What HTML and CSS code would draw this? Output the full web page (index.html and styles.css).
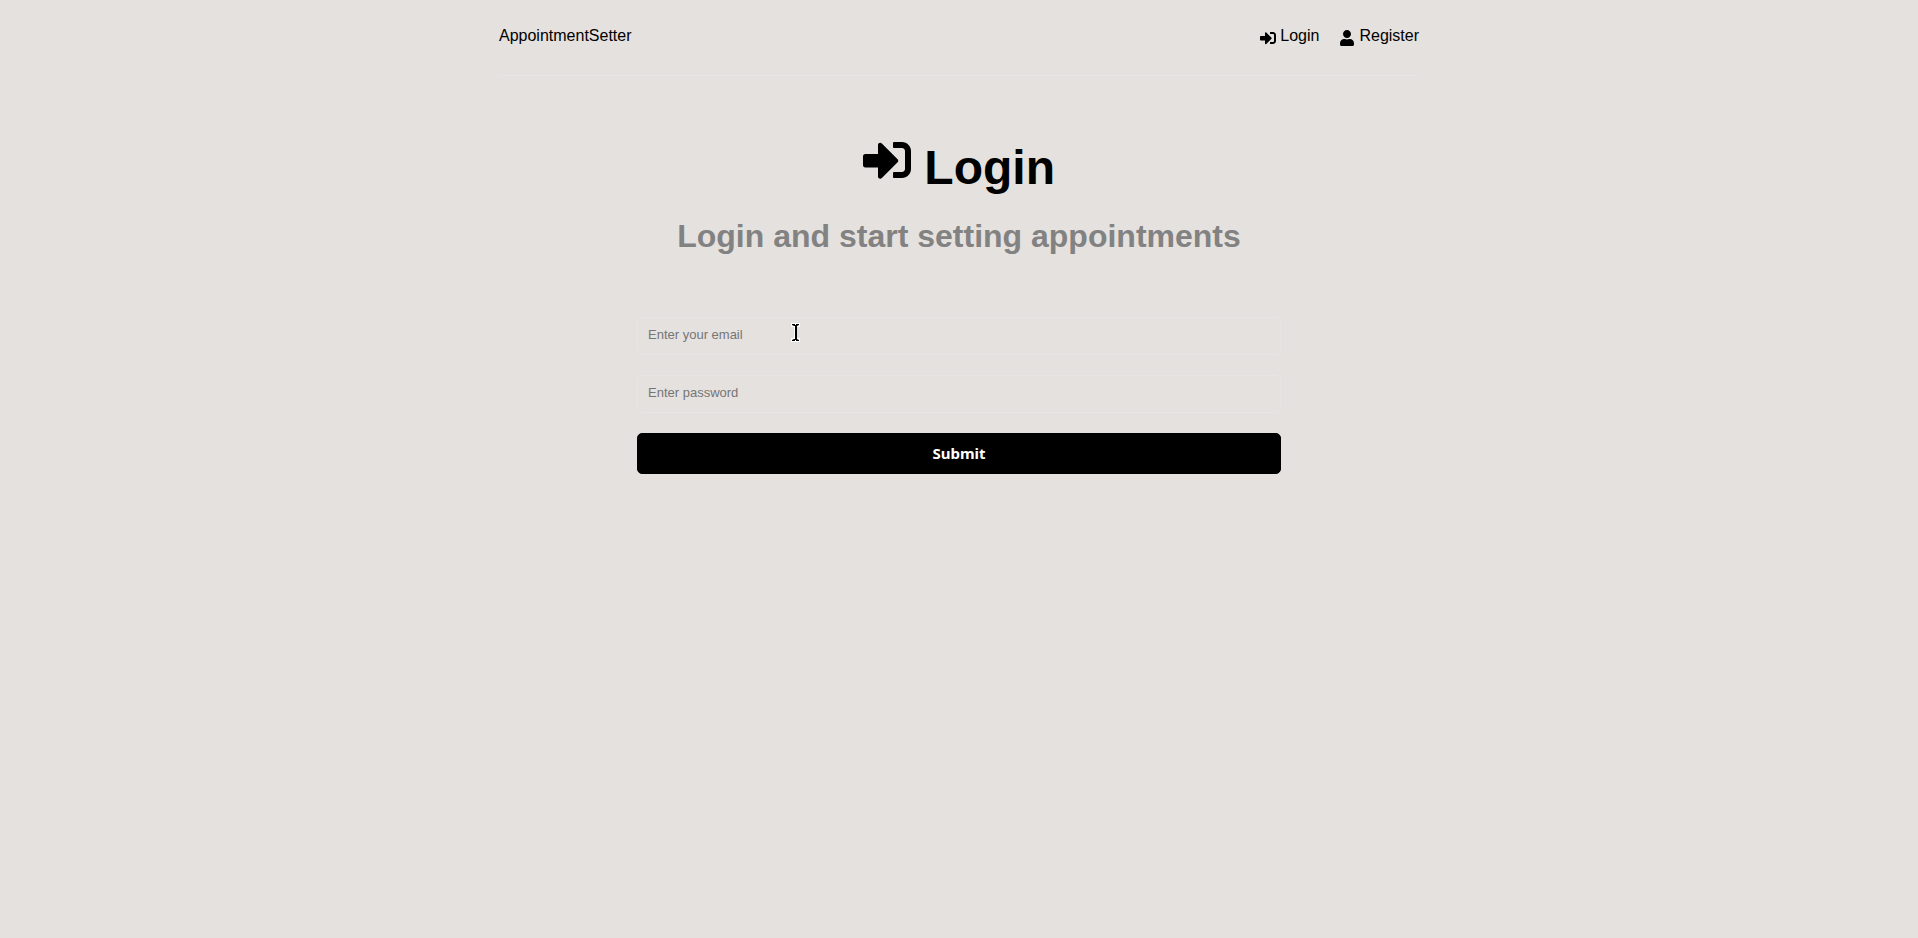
FILE: index.html
```html
<!DOCTYPE html>
<html lang="en">
<head>
  <meta charset="utf-8">
  <meta name="viewport" content="width=device-width, initial-scale=1">
  <title>AppointmentSetter</title>
  <link rel="stylesheet" href="styles.css">
</head>
<body>
  <div class="container">
    <header class="header">
      <a class="nav-link" href="#home">AppointmentSetter</a>
      <nav class="nav">
        <a class="nav-link" href="#login">
          <svg class="icon" viewBox="0 0 512 512" aria-hidden="true"><path d="M416 448h-84c-6.600 0-12-5.400-12-12v-40c0-6.600 5.400-12 12-12h84c17.700 0 32-14.300 32-32V160c0-17.700-14.300-32-32-32h-84c-6.600 0-12-5.400-12-12V76c0-6.600 5.400-12 12-12h84c53 0 96 43 96 96v192c0 53-43 96-96 96zm-47-201L201 79c-15-15-41-4.500-41 17v96H24c-13.300 0-24 10.700-24 24v96c0 13.300 10.700 24 24 24h136v96c0 21.500 26 32 41 17l168-168c9.300-9.400 9.300-24.600 0-34z"/></svg>
          <span>Login</span>
        </a>
        <a class="nav-link" href="#register">
          <svg class="icon" viewBox="0 0 448 512" aria-hidden="true"><path d="M224 256c70.700 0 128-57.300 128-128S294.700 0 224 0 96 57.300 96 128s57.300 128 128 128zm89.600 32h-16.700c-22.200 10.200-46.900 16-72.900 16s-50.600-5.800-72.900-16h-16.700C60.200 288 0 348.200 0 422.400V464c0 26.500 21.500 48 48 48h352c26.500 0 48-21.500 48-48v-41.600c0-74.200-60.200-134.400-134.400-134.400z"/></svg>
          <span>Register</span>
        </a>
      </nav>
    </header>
    <main>
      <section class="heading">
        <h1 class="title">
          <svg class="title-icon" viewBox="0 0 512 512" aria-hidden="true"><path d="M416 448h-84c-6.600 0-12-5.400-12-12v-40c0-6.600 5.400-12 12-12h84c17.700 0 32-14.300 32-32V160c0-17.700-14.300-32-32-32h-84c-6.600 0-12-5.400-12-12V76c0-6.600 5.400-12 12-12h84c53 0 96 43 96 96v192c0 53-43 96-96 96zm-47-201L201 79c-15-15-41-4.500-41 17v96H24c-13.300 0-24 10.700-24 24v96c0 13.300 10.700 24 24 24h136v96c0 21.500 26 32 41 17l168-168c9.300-9.400 9.300-24.600 0-34z"/></svg>
          Login
        </h1>
        <p class="subtitle">Login and start setting appointments</p>
      </section>
      <form class="form">
        <input class="field" type="email" name="email" aria-label="Email" placeholder="Enter your email">
        <input class="field" type="password" name="password" aria-label="Password" placeholder="Enter password">
        <button class="button" type="submit">Submit</button>
      </form>
    </main>
  </div>
  <svg class="pointer" viewBox="0 0 11 21" aria-hidden="true">
    <path class="pointer-halo" d="M2 2h3v1h1V2h3v2H6v13h3v2H6v-1H5v1H2v-2h3V4H2z"/>
    <path d="M2 2h3v1h1V2h3v1L7 4v13l2 1v1H6v-1H5v1H2v-1l2-1h1V4H4L2 3z"/>
  </svg>
</body>
</html>
```
FILE: styles.css
```css
* {
  box-sizing: border-box;
  margin: 0;
  padding: 0;
}

body {
  position: relative;
  background: #e5e1de;
  color: #000;
  font-family: "Liberation Sans", Arial, sans-serif;
  font-size: 16px;
  line-height: 20px;
}

.container {
  width: 100%;
  max-width: 960px;
  margin: 0 auto;
  padding: 0 20px;
}

.header {
  display: flex;
  justify-content: space-between;
  padding: 26px 0 29px;
  margin-bottom: 60px;
  border-bottom: 1px solid #e6e6e6;
}

.nav {
  display: flex;
  gap: 20px;
}

.nav-link {
  display: flex;
  align-items: flex-end;
  gap: 4px;
  color: inherit;
  text-decoration: none;
}

.icon {
  width: 16px;
  height: 16px;
}

.heading {
  padding: 0 20px;
  margin-bottom: 61px;
  text-align: center;
}

.title {
  margin-bottom: 20px;
  font-size: 48px;
  font-weight: 700;
  line-height: 56px;
}

.title-icon {
  width: 48px;
  height: 48px;
}

.subtitle {
  color: #828282;
  font-size: 32px;
  font-weight: 700;
  line-height: 40px;
}

.form {
  display: flex;
  flex-direction: column;
  gap: 20px;
  width: 70%;
  margin: 0 auto;
}

.field {
  width: 100%;
  height: 38px;
  padding: 0 10px 4px;
  border: 1px solid #e6e6e6;
  border-radius: 5px;
  background: transparent;
  color: #000;
  font-family: inherit;
  font-size: 13px;
}

.field::placeholder {
  color: #757575;
}

.button {
  width: 100%;
  padding: 10px 20px;
  border: 1px solid #000;
  border-radius: 5px;
  background: #000;
  color: #fff;
  font-family: "Noto Sans", sans-serif;
  font-size: 15px;
  font-weight: 700;
  line-height: 19px;
  cursor: pointer;
}

.pointer {
  position: absolute;
  top: 322px;
  left: calc(50% - 169px);
  width: 11px;
  height: 21px;
  pointer-events: none;
}

.pointer-halo {
  fill: #fff;
  stroke: #fff;
  stroke-width: 2;
}
```
